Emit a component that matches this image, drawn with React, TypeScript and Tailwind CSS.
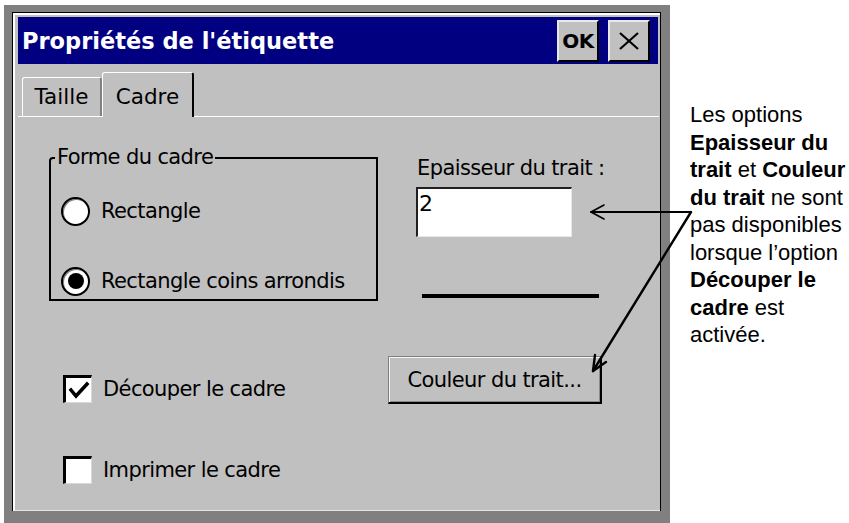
import React from "react";

const ui = "font-['DejaVu_Sans',sans-serif] text-black";

const Radio = ({ checked }: { checked?: boolean }) => (
  <span className="flex h-[29px] w-[29px] shrink-0 items-center justify-center rounded-full border-2 border-black bg-white shadow-[inset_1px_1px_0_#808080]">
    {checked && <span className="h-[16px] w-[16px] rounded-full bg-black" />}
  </span>
);

const Checkbox = ({ checked }: { checked?: boolean }) => (
  <span className="flex h-[28px] w-[29px] shrink-0 items-center justify-center border-t-[3px] border-l-[3px] border-r border-b border-t-black border-l-black border-r-[#d8d8d8] border-b-[#d8d8d8] bg-white">
    {checked && (
      <svg width="22" height="20" viewBox="0 0 22 20">
        <polyline
          points="3,10 8,16 19,4"
          fill="none"
          stroke="black"
          strokeWidth="3.5"
          strokeLinecap="square"
        />
      </svg>
    )}
  </span>
);

const Row = ({ children, label }: { children: React.ReactNode; label: string }) => (
  <div className="flex h-[30px] items-center">
    {children}
    <span className="ml-[11px] text-[21px] leading-[24px] tracking-[-0.6px]">{label}</span>
  </div>
);

export default function App() {
  return (
    <div className="relative flex h-[523px] w-[849px] items-start overflow-hidden bg-white">
      {/* dialog frame */}
      <div className="ml-[4px] mt-[5px] h-[518px] w-[666px] shrink-0 bg-[#808080] pl-[8px] pt-[7px]">
        <div className={`h-[499px] w-[649px] border-l border-t border-r border-black bg-[#c0c0c0] ${ui}`}>
          <div className="flex h-full flex-col border-l-2 border-t-2 border-b border-l-white border-t-white border-b-[#e4e4e4] pl-[3px] pr-[1px] pt-[2px]">
            {/* title bar */}
            <div className="flex h-[47px] w-[640px] items-center justify-between bg-[#000080] pl-[4px] pr-[8px]">
              <span className="text-[22.5px] font-bold leading-[28px] text-white">
                Propriétés de l'étiquette
              </span>
              <div className="flex gap-[9px]">
                <div className="flex h-[42px] w-[42px] items-center justify-center border-t-2 border-l-2 border-b-2 border-r-2 border-t-[#e8e8e8] border-l-[#e8e8e8] border-b-black border-r-black bg-[#c0c0c0] text-[20px] font-bold leading-none tracking-[-0.5px]">
                  OK
                </div>
                <div className="flex h-[42px] w-[42px] items-center justify-center border-t-2 border-l-2 border-b-2 border-r-2 border-t-[#e8e8e8] border-l-[#e8e8e8] border-b-black border-r-black bg-[#c0c0c0]">
                  <svg width="22" height="18" viewBox="0 0 22 18">
                    <line x1="2" y1="1" x2="20" y2="17" stroke="black" strokeWidth="2.2" />
                    <line x1="20" y1="1" x2="2" y2="17" stroke="black" strokeWidth="2.2" />
                  </svg>
                </div>
              </div>
            </div>

            {/* tabs */}
            <div className="flex h-[53px] items-end border-b border-white pl-[4px]">
              <div className="flex h-[39px] w-[80px] items-center justify-center rounded-t-[3px] border-l border-t border-r-2 border-l-white border-t-white border-r-[#808080] text-[21.5px] leading-[24px]">
                Taille
              </div>
              <div className="relative -mb-px flex h-[45px] w-[92px] items-center justify-center rounded-t-[3px] border-l border-t border-r-2 border-l-white border-t-white border-r-black bg-[#c0c0c0] pt-[3px] text-[21.5px] leading-[24px]">
                Cadre
              </div>
            </div>

            {/* panel */}
            <div className="flex pl-[31px]">
              <div className="flex w-[329px] flex-col">
                <div className="mt-[40px] h-[144px] rounded-tl-[4px] border-2 border-black">
                  <div className="-mt-[14px] ml-[4px] w-fit bg-[#c0c0c0] px-[2px] text-[21px] leading-[24px] tracking-[-0.6px]">
                    Forme du cadre
                  </div>
                  <div className="mt-[27px] pl-[10px]">
                    <Row label="Rectangle">
                      <Radio />
                    </Row>
                    <div className="mt-[40px]">
                      <Row label="Rectangle coins arrondis">
                        <Radio checked />
                      </Row>
                    </div>
                  </div>
                </div>
                <div className="mt-[73px] pl-[14px]">
                  <Row label="Découper le cadre">
                    <Checkbox checked />
                  </Row>
                </div>
                <div className="mt-[51px] pl-[14px]">
                  <Row label="Imprimer le cadre">
                    <Checkbox />
                  </Row>
                </div>
              </div>

              <div className="ml-[10px] flex flex-col">
                <div className="ml-[29px] mt-[39px] text-[21px] leading-[24px] tracking-[-0.6px]">
                  Epaisseur du trait :
                </div>
                <div className="ml-[28px] mt-[7px] h-[50px] w-[156px] border-t-2 border-l-2 border-r border-b border-t-[#202020] border-l-[#202020] border-r-[#e8e8e8] border-b-[#e8e8e8] bg-white pl-[1px] pt-[2px] text-[22px] leading-[26px]">
                  2
                </div>
                <div className="ml-[34px] mt-[57px] h-[4px] w-[177px] bg-black" />
                <div className="mt-[58px] flex h-[48px] w-[214px] items-center justify-center border-t border-l border-b-2 border-r-2 border-t-[#808080] border-l-[#808080] border-b-black border-r-black bg-[#c0c0c0] text-[21px] leading-[24px] tracking-[-0.6px] shadow-[inset_1px_1px_0_#f4f4f4,inset_-1px_-1px_0_#8a8a8a]">
                  Couleur du trait...
                </div>
              </div>
            </div>
          </div>
        </div>
      </div>

      {/* annotation */}
      <div className="ml-[20px] mt-[101px] font-['Liberation_Sans',Arial,sans-serif] text-[22px] leading-[27.5px] text-black">
        Les options
        <br />
        <b>Epaisseur du</b>
        <br />
        <b>trait</b> et <b>Couleur</b>
        <br />
        <b>du trait</b> ne sont
        <br />
        pas disponibles
        <br />
        lorsque l’option
        <br />
        <b>Découper le</b>
        <br />
        <b>cadre</b> est
        <br />
        activée.
      </div>

      {/* callout arrows */}
      <svg className="pointer-events-none absolute inset-0" width="849" height="523" viewBox="0 0 849 523">
        <g fill="none" stroke="black" strokeLinecap="round" strokeLinejoin="round">
          <line x1="691" y1="212" x2="591" y2="212" strokeWidth="1.8" />
          <polyline points="604,205 591,212 604,219" strokeWidth="1.6" />
          <line x1="691" y1="212" x2="593" y2="371" strokeWidth="2.4" />
          <polyline points="606,362 593,371 595,355" strokeWidth="2.4" />
        </g>
      </svg>
    </div>
  );
}
